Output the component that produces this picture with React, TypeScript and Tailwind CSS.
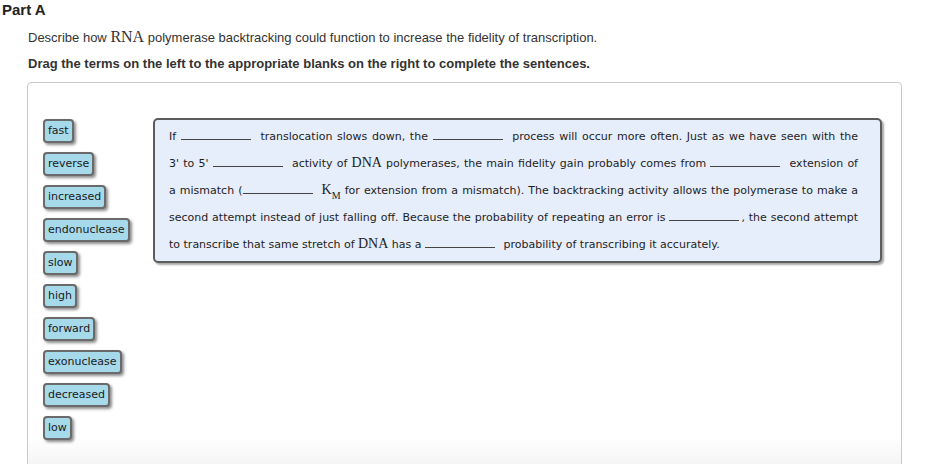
import React from "react";

const terms = [
  "fast",
  "reverse",
  "increased",
  "endonuclease",
  "slow",
  "high",
  "forward",
  "exonuclease",
  "decreased",
  "low",
];

const Blank = ({ tight }: { tight?: boolean }) => (
  <span
    className={`inline-block w-[70px] border-b border-[#444] align-baseline ${
      tight ? "mr-[2px]" : "mr-[5px]"
    }`}
  />
);

const Math = ({ size = "text-[14px]", children }: { size?: string; children: React.ReactNode }) => (
  <span className={`font-['Liberation_Serif',serif] leading-none ${size}`}>{children}</span>
);

const Km = () => (
  <span className="font-['Liberation_Serif',serif] text-[14px] leading-none">
    K<sub className="text-[10px] leading-none align-[-2px]">M</sub>
  </span>
);

const justify = "text-justify [text-align-last:justify] whitespace-nowrap";

export default function App() {
  return (
    <div className="w-[938px] h-[464px] overflow-hidden bg-white font-['Liberation_Sans',Arial,sans-serif] text-[#222]">
      <h2 className="pl-[2px] pt-[1px] text-[15px] font-bold leading-[18px]">Part A</h2>

      <p className="mt-[10px] pl-[28px] text-[13px] leading-[16px] text-[#333]">
        Describe how <Math size="text-[16px]">RNA</Math> polymerase backtracking could function to increase the
        fidelity of transcription.
      </p>

      <p className="mt-[10px] pl-[28px] text-[13px] font-bold leading-[16px] text-[#333]">
        Drag the terms on the left to the appropriate blanks on the right to complete the sentences.
      </p>

      <div className="mt-[10px] ml-[27px] w-[875px] h-[390px] rounded-[4px] border border-[#c9c9c9] bg-[linear-gradient(to_bottom,#ffffff_354px,#f3f3f3_387px)]">
        <div className="flex items-start pt-[35px] pl-[15px]">
          {/* draggable terms */}
          <div className="w-[110px] pt-[1px] flex flex-col items-start gap-[9px]">
            {terms.map((t) => (
              <span
                key={t}
                className="rounded-[4px] border-2 border-[#6a6a6a] bg-[#a6d9ea] px-[3px] text-[11px] leading-[20px] text-[#1a1a1a] font-['DejaVu_Sans',Verdana,sans-serif] shadow-[2px_2px_3px_rgba(0,0,0,0.45)]"
              >
                {t}
              </span>
            ))}
          </div>

          {/* sentences with drop targets */}
          <div className="w-[729px] rounded-[5px] border-2 border-[#5c5c5c] bg-[#e6edfb] py-[3px] pl-[14px] pr-[22px] text-[11px] leading-[27px] text-[#1e1e1e] font-['DejaVu_Sans',Verdana,sans-serif] shadow-[2px_2px_2px_rgba(0,0,0,0.35)]">
            <div className={justify}>
              If <Blank /> translocation slows down, the <Blank /> process will occur more often. Just as we have
              seen with the
            </div>
            <div className={justify}>
              3' to 5' <Blank /> activity of <Math>DNA</Math> polymerases, the main fidelity gain probably comes from{" "}
              <Blank /> extension of
            </div>
            <div className={justify}>
              a mismatch (<Blank /> <Km /> for extension from a mismatch). The backtracking activity allows the
              polymerase to make a
            </div>
            <div className={justify}>
              second attempt instead of just falling off. Because the probability of repeating an error is{" "}
              <Blank tight />, the second attempt
            </div>
            <div className="whitespace-nowrap">
              to transcribe that same stretch of <Math>DNA</Math> has a <Blank /> probability of transcribing it
              accurately.
            </div>
          </div>
        </div>
      </div>
    </div>
  );
}
